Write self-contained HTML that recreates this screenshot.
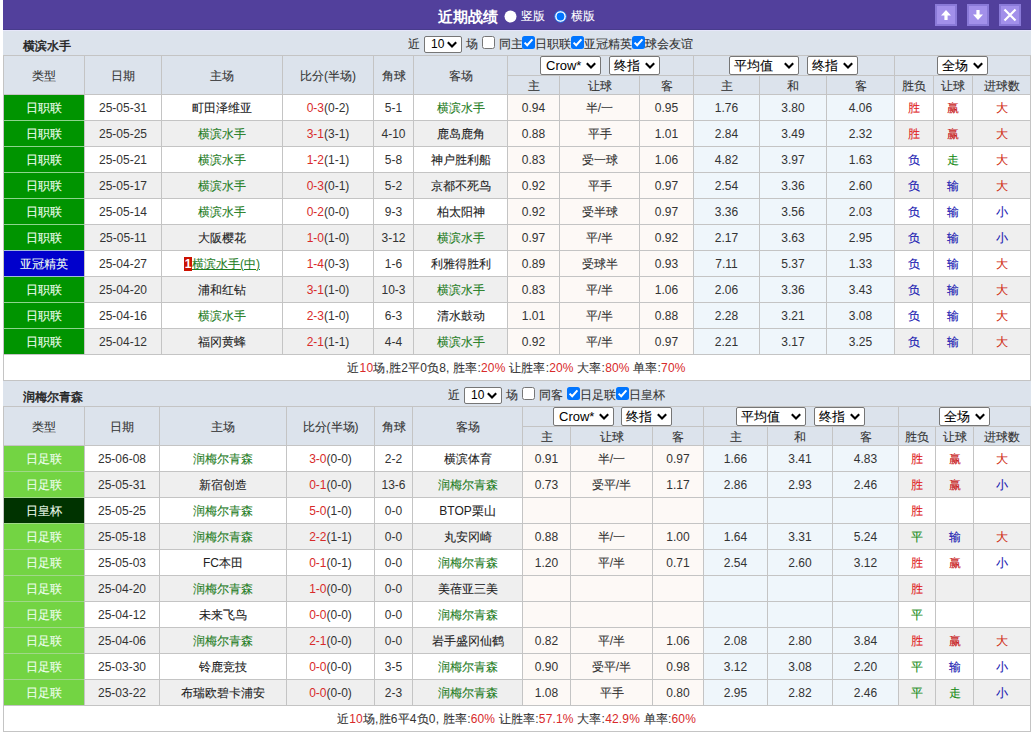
<!DOCTYPE html>
<html><head><meta charset="utf-8">
<style>
html,body{margin:0;padding:0;background:#fff;}
#root{position:relative;width:1033px;height:733px;overflow:hidden;background:#fff;font-family:"Liberation Sans",sans-serif;font-size:12px;}
#root div{position:absolute;box-sizing:border-box;}
#root .t{text-align:center;white-space:nowrap;}
#root .c{-webkit-text-stroke:0.1px currentColor;}
#root .b .c{-webkit-text-stroke:0.45px currentColor;}
#root .nb .c{-webkit-text-stroke:0;}
#root .sel{background:#fff;border:1px solid #767676;border-radius:2px;box-sizing:content-box;color:#000;}
</style></head><body><div id="root">
<div style="left:3px;top:0px;width:1028px;height:30px;background:#52409c"></div>
<div style="left:3px;top:30px;width:1028px;height:1px;background:#e6e6fa"></div>
<div style="left:3px;top:29px;width:1028px;height:1px;background:#483c8c"></div>
<div class="t" style="left:438px;top:7px;width:64px;height:20px;line-height:20px;font-size:15px;font-weight:bold;color:#fff;text-align:left"><span class="nb"><span class="c">近期战绩</span></span></div>
<svg style="position:absolute;left:504px;top:10px" width="13" height="13" viewBox="0 0 13 13"><circle cx="6.5" cy="6.5" r="6" fill="#fff"/></svg>
<div class="t" style="left:521px;top:6px;width:30px;height:20px;line-height:20px;color:#fff;text-align:left"><span class="c">竖版</span></div>
<svg style="position:absolute;left:554px;top:10px" width="13" height="13" viewBox="0 0 13 13"><circle cx="6.5" cy="6.5" r="5.8" fill="#fff" stroke="#1a6fe8" stroke-width="1"/><circle cx="6.5" cy="6.5" r="3.9" fill="#0075ff"/></svg>
<div class="t" style="left:571px;top:6px;width:30px;height:20px;line-height:20px;color:#fff;text-align:left"><span class="c">横版</span></div>
<div style="left:935px;top:4px;width:22px;height:22px;background:#8a7ad8"></div>
<div style="left:937px;top:6px;width:18px;height:18px;background:#a290ea"></div>
<svg style="position:absolute;left:935px;top:4px" width="22" height="22" viewBox="0 0 22 22"><path d="M11 6 L16 11.5 L12.6 11.5 L12.6 16 L9.4 16 L9.4 11.5 L6 11.5 Z" fill="#fff"/></svg>
<div style="left:967px;top:4px;width:22px;height:22px;background:#8a7ad8"></div>
<div style="left:969px;top:6px;width:18px;height:18px;background:#a290ea"></div>
<svg style="position:absolute;left:967px;top:4px" width="22" height="22" viewBox="0 0 22 22"><path d="M11 16 L16 10.5 L12.6 10.5 L12.6 6 L9.4 6 L9.4 10.5 L6 10.5 Z" fill="#fff"/></svg>
<div style="left:999px;top:4px;width:22px;height:22px;background:#8a7ad8"></div>
<div style="left:1001px;top:6px;width:18px;height:18px;background:#a290ea"></div>
<svg style="position:absolute;left:999px;top:4px" width="22" height="22" viewBox="0 0 22 22"><path d="M5.5 5.5 L16.5 16.5 M16.5 5.5 L5.5 16.5" stroke="#fff" stroke-width="2.2"/></svg>
<div style="left:3px;top:31px;width:1028px;height:24px;background:#dce3ec"></div>
<div class="t" style="left:23px;top:38px;width:80px;height:16px;line-height:16px;color:#222222;text-align:left"><span class="b"><span class="c">横滨水手</span></span></div>
<div class="t" style="left:408px;top:35px;width:14px;height:18px;line-height:18px;color:#333333;text-align:left"><span class="c">近</span></div>
<div class="sel" style="left:424px;top:36px;width:36px;height:15px;"><span style="position:absolute;left:6px;top:0;line-height:15px;font-size:12px;font-family:"Liberation Mono",monospace;letter-spacing:-1px;top:1px">10</span><svg style="position:absolute;left:22px;top:4px" width="10" height="7" viewBox="0 0 10 7"><path d="M0.8 1.2 L5 5.4 L9.2 1.2" fill="none" stroke="#000" stroke-width="2.1"/></svg></div>
<div class="t" style="left:466px;top:35px;width:14px;height:18px;line-height:18px;color:#333333;text-align:left"><span class="c">场</span></div>
<svg style="position:absolute;left:482px;top:36px" width="13" height="13" viewBox="0 0 13 13"><rect x="0.5" y="0.5" width="12" height="12" rx="2" fill="#fff" stroke="#767676" stroke-width="1"/></svg>
<div class="t" style="left:499px;top:35px;width:24px;height:18px;line-height:18px;color:#333333;text-align:left"><span class="c">同主</span></div>
<svg style="position:absolute;left:522px;top:36px" width="13" height="13" viewBox="0 0 13 13"><rect x="0" y="0" width="13" height="13" rx="2.5" fill="#0075ff"/><path d="M2.6 6.6 L5.2 9.2 L10.4 3.4" fill="none" stroke="#fff" stroke-width="2"/></svg>
<div class="t" style="left:535px;top:35px;width:36px;height:18px;line-height:18px;color:#333333;text-align:left"><span class="c">日职联</span></div>
<svg style="position:absolute;left:571px;top:36px" width="13" height="13" viewBox="0 0 13 13"><rect x="0" y="0" width="13" height="13" rx="2.5" fill="#0075ff"/><path d="M2.6 6.6 L5.2 9.2 L10.4 3.4" fill="none" stroke="#fff" stroke-width="2"/></svg>
<div class="t" style="left:584px;top:35px;width:48px;height:18px;line-height:18px;color:#333333;text-align:left"><span class="c">亚冠精英</span></div>
<svg style="position:absolute;left:632px;top:36px" width="13" height="13" viewBox="0 0 13 13"><rect x="0" y="0" width="13" height="13" rx="2.5" fill="#0075ff"/><path d="M2.6 6.6 L5.2 9.2 L10.4 3.4" fill="none" stroke="#fff" stroke-width="2"/></svg>
<div class="t" style="left:645px;top:35px;width:48px;height:18px;line-height:18px;color:#333333;text-align:left"><span class="c">球会友谊</span></div>
<div style="left:3px;top:55px;width:1028px;height:39px;background:#dce3ec"></div>
<div style="left:3px;top:94px;width:1027px;height:26px;background:#ffffff"></div>
<div style="left:4px;top:95px;width:80px;height:25px;background:#009400"></div>
<div style="left:508px;top:94px;width:185px;height:26px;background:#fdf9f6"></div>
<div style="left:694px;top:94px;width:200px;height:26px;background:#eff6fb"></div>
<div style="left:3px;top:120px;width:1027px;height:26px;background:#efefef"></div>
<div style="left:4px;top:121px;width:80px;height:25px;background:#009400"></div>
<div style="left:508px;top:120px;width:185px;height:26px;background:#fdf9f6"></div>
<div style="left:694px;top:120px;width:200px;height:26px;background:#eff6fb"></div>
<div style="left:3px;top:146px;width:1027px;height:26px;background:#ffffff"></div>
<div style="left:4px;top:147px;width:80px;height:25px;background:#009400"></div>
<div style="left:508px;top:146px;width:185px;height:26px;background:#fdf9f6"></div>
<div style="left:694px;top:146px;width:200px;height:26px;background:#eff6fb"></div>
<div style="left:3px;top:172px;width:1027px;height:26px;background:#efefef"></div>
<div style="left:4px;top:173px;width:80px;height:25px;background:#009400"></div>
<div style="left:508px;top:172px;width:185px;height:26px;background:#fdf9f6"></div>
<div style="left:694px;top:172px;width:200px;height:26px;background:#eff6fb"></div>
<div style="left:3px;top:198px;width:1027px;height:26px;background:#ffffff"></div>
<div style="left:4px;top:199px;width:80px;height:25px;background:#009400"></div>
<div style="left:508px;top:198px;width:185px;height:26px;background:#fdf9f6"></div>
<div style="left:694px;top:198px;width:200px;height:26px;background:#eff6fb"></div>
<div style="left:3px;top:224px;width:1027px;height:26px;background:#efefef"></div>
<div style="left:4px;top:225px;width:80px;height:25px;background:#009400"></div>
<div style="left:508px;top:224px;width:185px;height:26px;background:#fdf9f6"></div>
<div style="left:694px;top:224px;width:200px;height:26px;background:#eff6fb"></div>
<div style="left:3px;top:250px;width:1027px;height:26px;background:#ffffff"></div>
<div style="left:4px;top:251px;width:80px;height:25px;background:#0000cc"></div>
<div style="left:508px;top:250px;width:185px;height:26px;background:#fdf9f6"></div>
<div style="left:694px;top:250px;width:200px;height:26px;background:#eff6fb"></div>
<div style="left:3px;top:276px;width:1027px;height:26px;background:#efefef"></div>
<div style="left:4px;top:277px;width:80px;height:25px;background:#009400"></div>
<div style="left:508px;top:276px;width:185px;height:26px;background:#fdf9f6"></div>
<div style="left:694px;top:276px;width:200px;height:26px;background:#eff6fb"></div>
<div style="left:3px;top:302px;width:1027px;height:26px;background:#ffffff"></div>
<div style="left:4px;top:303px;width:80px;height:25px;background:#009400"></div>
<div style="left:508px;top:302px;width:185px;height:26px;background:#fdf9f6"></div>
<div style="left:694px;top:302px;width:200px;height:26px;background:#eff6fb"></div>
<div style="left:3px;top:328px;width:1027px;height:26px;background:#efefef"></div>
<div style="left:4px;top:329px;width:80px;height:25px;background:#009400"></div>
<div style="left:508px;top:328px;width:185px;height:26px;background:#fdf9f6"></div>
<div style="left:694px;top:328px;width:200px;height:26px;background:#eff6fb"></div>
<div style="left:3px;top:354px;width:1027px;height:26px;background:#fff"></div>
<div style="left:3px;top:55px;width:1028px;height:1px;background:#c4c4c4"></div>
<div style="left:507px;top:75px;width:524px;height:1px;background:#c4c4c4"></div>
<div style="left:3px;top:94px;width:1028px;height:1px;background:#c4c4c4"></div>
<div style="left:3px;top:120px;width:1028px;height:1px;background:#c4c4c4"></div>
<div style="left:3px;top:146px;width:1028px;height:1px;background:#c4c4c4"></div>
<div style="left:3px;top:172px;width:1028px;height:1px;background:#c4c4c4"></div>
<div style="left:3px;top:198px;width:1028px;height:1px;background:#c4c4c4"></div>
<div style="left:3px;top:224px;width:1028px;height:1px;background:#c4c4c4"></div>
<div style="left:3px;top:250px;width:1028px;height:1px;background:#c4c4c4"></div>
<div style="left:3px;top:276px;width:1028px;height:1px;background:#c4c4c4"></div>
<div style="left:3px;top:302px;width:1028px;height:1px;background:#c4c4c4"></div>
<div style="left:3px;top:328px;width:1028px;height:1px;background:#c4c4c4"></div>
<div style="left:3px;top:354px;width:1028px;height:1px;background:#c4c4c4"></div>
<div style="left:3px;top:380px;width:1028px;height:1px;background:#c4c4c4"></div>
<div style="left:3px;top:55px;width:1px;height:326px;background:#c4c4c4"></div>
<div style="left:84px;top:55px;width:1px;height:300px;background:#c4c4c4"></div>
<div style="left:161px;top:55px;width:1px;height:300px;background:#c4c4c4"></div>
<div style="left:282px;top:55px;width:1px;height:300px;background:#c4c4c4"></div>
<div style="left:373px;top:55px;width:1px;height:300px;background:#c4c4c4"></div>
<div style="left:413px;top:55px;width:1px;height:300px;background:#c4c4c4"></div>
<div style="left:507px;top:55px;width:1px;height:300px;background:#c4c4c4"></div>
<div style="left:559px;top:75px;width:1px;height:280px;background:#c4c4c4"></div>
<div style="left:639px;top:75px;width:1px;height:280px;background:#c4c4c4"></div>
<div style="left:693px;top:55px;width:1px;height:300px;background:#c4c4c4"></div>
<div style="left:759px;top:75px;width:1px;height:280px;background:#c4c4c4"></div>
<div style="left:826px;top:75px;width:1px;height:280px;background:#c4c4c4"></div>
<div style="left:894px;top:55px;width:1px;height:300px;background:#c4c4c4"></div>
<div style="left:933px;top:75px;width:1px;height:280px;background:#c4c4c4"></div>
<div style="left:972px;top:75px;width:1px;height:280px;background:#c4c4c4"></div>
<div style="left:1030px;top:55px;width:1px;height:326px;background:#c4c4c4"></div>
<div style="left:4px;top:120px;width:80px;height:1px;background:#8ed48e"></div>
<div style="left:4px;top:146px;width:80px;height:1px;background:#8ed48e"></div>
<div style="left:4px;top:172px;width:80px;height:1px;background:#8ed48e"></div>
<div style="left:4px;top:198px;width:80px;height:1px;background:#8ed48e"></div>
<div style="left:4px;top:224px;width:80px;height:1px;background:#8ed48e"></div>
<div style="left:4px;top:250px;width:80px;height:1px;background:#a0b8d8"></div>
<div style="left:4px;top:276px;width:80px;height:1px;background:#a0b8d8"></div>
<div style="left:4px;top:302px;width:80px;height:1px;background:#8ed48e"></div>
<div style="left:4px;top:328px;width:80px;height:1px;background:#8ed48e"></div>
<div class="t" style="left:4px;top:57px;width:80px;height:38px;line-height:38px;color:#333333"><span class="c">类型</span></div>
<div class="t" style="left:85px;top:57px;width:76px;height:38px;line-height:38px;color:#333333"><span class="c">日期</span></div>
<div class="t" style="left:162px;top:57px;width:120px;height:38px;line-height:38px;color:#333333"><span class="c">主场</span></div>
<div class="t" style="left:283px;top:57px;width:90px;height:38px;line-height:38px;color:#333333"><span class="c">比分</span>(<span class="c">半场</span>)</div>
<div class="t" style="left:374px;top:57px;width:39px;height:38px;line-height:38px;color:#333333"><span class="c">角球</span></div>
<div class="t" style="left:414px;top:57px;width:93px;height:38px;line-height:38px;color:#333333"><span class="c">客场</span></div>
<div class="t" style="left:508px;top:77px;width:51px;height:18px;line-height:18px;color:#333333"><span class="c">主</span></div>
<div class="t" style="left:560px;top:77px;width:79px;height:18px;line-height:18px;color:#333333"><span class="c">让球</span></div>
<div class="t" style="left:640px;top:77px;width:53px;height:18px;line-height:18px;color:#333333"><span class="c">客</span></div>
<div class="t" style="left:694px;top:77px;width:65px;height:18px;line-height:18px;color:#333333"><span class="c">主</span></div>
<div class="t" style="left:760px;top:77px;width:66px;height:18px;line-height:18px;color:#333333"><span class="c">和</span></div>
<div class="t" style="left:827px;top:77px;width:67px;height:18px;line-height:18px;color:#333333"><span class="c">客</span></div>
<div class="t" style="left:895px;top:77px;width:38px;height:18px;line-height:18px;color:#333333"><span class="c">胜负</span></div>
<div class="t" style="left:934px;top:77px;width:38px;height:18px;line-height:18px;color:#333333"><span class="c">让球</span></div>
<div class="t" style="left:973px;top:77px;width:57px;height:18px;line-height:18px;color:#333333"><span class="c">进球数</span></div>
<div class="t" style="left:4px;top:96px;width:80px;height:25px;line-height:25px;color:#f0fff0"><span class="c">日职联</span></div>
<div class="t" style="left:85px;top:96px;width:76px;height:25px;line-height:25px;color:#333333">25-05-31</div>
<div class="t" style="left:162px;top:96px;width:120px;height:25px;line-height:25px;color:#222222"><span class="c">町田泽维亚</span></div>
<div class="t" style="left:283px;top:96px;width:90px;height:25px;line-height:25px;color:#333333"><span style="color:#d82a2a">0-3</span>(0-2)</div>
<div class="t" style="left:374px;top:96px;width:39px;height:25px;line-height:25px;color:#333333">5-1</div>
<div class="t" style="left:414px;top:96px;width:93px;height:25px;line-height:25px;color:#1f7d1f"><span class="c">横滨水手</span></div>
<div class="t" style="left:508px;top:96px;width:51px;height:25px;line-height:25px;color:#333333">0.94</div>
<div class="t" style="left:560px;top:96px;width:79px;height:25px;line-height:25px;color:#333333"><span class="c">半</span>/<span class="c">一</span></div>
<div class="t" style="left:640px;top:96px;width:53px;height:25px;line-height:25px;color:#333333">0.95</div>
<div class="t" style="left:694px;top:96px;width:65px;height:25px;line-height:25px;color:#333333">1.76</div>
<div class="t" style="left:760px;top:96px;width:66px;height:25px;line-height:25px;color:#333333">3.80</div>
<div class="t" style="left:827px;top:96px;width:67px;height:25px;line-height:25px;color:#333333">4.06</div>
<div class="t" style="left:895px;top:96px;width:38px;height:25px;line-height:25px;color:#e02424"><span class="c">胜</span></div>
<div class="t" style="left:934px;top:96px;width:38px;height:25px;line-height:25px;color:#c81818"><span class="c">赢</span></div>
<div class="t" style="left:973px;top:96px;width:57px;height:25px;line-height:25px;color:#d02a10"><span class="c">大</span></div>
<div class="t" style="left:4px;top:122px;width:80px;height:25px;line-height:25px;color:#f0fff0"><span class="c">日职联</span></div>
<div class="t" style="left:85px;top:122px;width:76px;height:25px;line-height:25px;color:#333333">25-05-25</div>
<div class="t" style="left:162px;top:122px;width:120px;height:25px;line-height:25px;color:#1f7d1f"><span class="c">横滨水手</span></div>
<div class="t" style="left:283px;top:122px;width:90px;height:25px;line-height:25px;color:#333333"><span style="color:#d82a2a">3-1</span>(3-1)</div>
<div class="t" style="left:374px;top:122px;width:39px;height:25px;line-height:25px;color:#333333">4-10</div>
<div class="t" style="left:414px;top:122px;width:93px;height:25px;line-height:25px;color:#222222"><span class="c">鹿岛鹿角</span></div>
<div class="t" style="left:508px;top:122px;width:51px;height:25px;line-height:25px;color:#333333">0.88</div>
<div class="t" style="left:560px;top:122px;width:79px;height:25px;line-height:25px;color:#333333"><span class="c">平手</span></div>
<div class="t" style="left:640px;top:122px;width:53px;height:25px;line-height:25px;color:#333333">1.01</div>
<div class="t" style="left:694px;top:122px;width:65px;height:25px;line-height:25px;color:#333333">2.84</div>
<div class="t" style="left:760px;top:122px;width:66px;height:25px;line-height:25px;color:#333333">3.49</div>
<div class="t" style="left:827px;top:122px;width:67px;height:25px;line-height:25px;color:#333333">2.32</div>
<div class="t" style="left:895px;top:122px;width:38px;height:25px;line-height:25px;color:#e02424"><span class="c">胜</span></div>
<div class="t" style="left:934px;top:122px;width:38px;height:25px;line-height:25px;color:#c81818"><span class="c">赢</span></div>
<div class="t" style="left:973px;top:122px;width:57px;height:25px;line-height:25px;color:#d02a10"><span class="c">大</span></div>
<div class="t" style="left:4px;top:148px;width:80px;height:25px;line-height:25px;color:#f0fff0"><span class="c">日职联</span></div>
<div class="t" style="left:85px;top:148px;width:76px;height:25px;line-height:25px;color:#333333">25-05-21</div>
<div class="t" style="left:162px;top:148px;width:120px;height:25px;line-height:25px;color:#1f7d1f"><span class="c">横滨水手</span></div>
<div class="t" style="left:283px;top:148px;width:90px;height:25px;line-height:25px;color:#333333"><span style="color:#d82a2a">1-2</span>(1-1)</div>
<div class="t" style="left:374px;top:148px;width:39px;height:25px;line-height:25px;color:#333333">5-8</div>
<div class="t" style="left:414px;top:148px;width:93px;height:25px;line-height:25px;color:#222222"><span class="c">神户胜利船</span></div>
<div class="t" style="left:508px;top:148px;width:51px;height:25px;line-height:25px;color:#333333">0.83</div>
<div class="t" style="left:560px;top:148px;width:79px;height:25px;line-height:25px;color:#333333"><span class="c">受一球</span></div>
<div class="t" style="left:640px;top:148px;width:53px;height:25px;line-height:25px;color:#333333">1.06</div>
<div class="t" style="left:694px;top:148px;width:65px;height:25px;line-height:25px;color:#333333">4.82</div>
<div class="t" style="left:760px;top:148px;width:66px;height:25px;line-height:25px;color:#333333">3.97</div>
<div class="t" style="left:827px;top:148px;width:67px;height:25px;line-height:25px;color:#333333">1.63</div>
<div class="t" style="left:895px;top:148px;width:38px;height:25px;line-height:25px;color:#1414b0"><span class="c">负</span></div>
<div class="t" style="left:934px;top:148px;width:38px;height:25px;line-height:25px;color:#138a13"><span class="c">走</span></div>
<div class="t" style="left:973px;top:148px;width:57px;height:25px;line-height:25px;color:#d02a10"><span class="c">大</span></div>
<div class="t" style="left:4px;top:174px;width:80px;height:25px;line-height:25px;color:#f0fff0"><span class="c">日职联</span></div>
<div class="t" style="left:85px;top:174px;width:76px;height:25px;line-height:25px;color:#333333">25-05-17</div>
<div class="t" style="left:162px;top:174px;width:120px;height:25px;line-height:25px;color:#1f7d1f"><span class="c">横滨水手</span></div>
<div class="t" style="left:283px;top:174px;width:90px;height:25px;line-height:25px;color:#333333"><span style="color:#d82a2a">0-3</span>(0-1)</div>
<div class="t" style="left:374px;top:174px;width:39px;height:25px;line-height:25px;color:#333333">5-2</div>
<div class="t" style="left:414px;top:174px;width:93px;height:25px;line-height:25px;color:#222222"><span class="c">京都不死鸟</span></div>
<div class="t" style="left:508px;top:174px;width:51px;height:25px;line-height:25px;color:#333333">0.92</div>
<div class="t" style="left:560px;top:174px;width:79px;height:25px;line-height:25px;color:#333333"><span class="c">平手</span></div>
<div class="t" style="left:640px;top:174px;width:53px;height:25px;line-height:25px;color:#333333">0.97</div>
<div class="t" style="left:694px;top:174px;width:65px;height:25px;line-height:25px;color:#333333">2.54</div>
<div class="t" style="left:760px;top:174px;width:66px;height:25px;line-height:25px;color:#333333">3.36</div>
<div class="t" style="left:827px;top:174px;width:67px;height:25px;line-height:25px;color:#333333">2.60</div>
<div class="t" style="left:895px;top:174px;width:38px;height:25px;line-height:25px;color:#1414b0"><span class="c">负</span></div>
<div class="t" style="left:934px;top:174px;width:38px;height:25px;line-height:25px;color:#1414b0"><span class="c">输</span></div>
<div class="t" style="left:973px;top:174px;width:57px;height:25px;line-height:25px;color:#d02a10"><span class="c">大</span></div>
<div class="t" style="left:4px;top:200px;width:80px;height:25px;line-height:25px;color:#f0fff0"><span class="c">日职联</span></div>
<div class="t" style="left:85px;top:200px;width:76px;height:25px;line-height:25px;color:#333333">25-05-14</div>
<div class="t" style="left:162px;top:200px;width:120px;height:25px;line-height:25px;color:#1f7d1f"><span class="c">横滨水手</span></div>
<div class="t" style="left:283px;top:200px;width:90px;height:25px;line-height:25px;color:#333333"><span style="color:#d82a2a">0-2</span>(0-0)</div>
<div class="t" style="left:374px;top:200px;width:39px;height:25px;line-height:25px;color:#333333">9-3</div>
<div class="t" style="left:414px;top:200px;width:93px;height:25px;line-height:25px;color:#222222"><span class="c">柏太阳神</span></div>
<div class="t" style="left:508px;top:200px;width:51px;height:25px;line-height:25px;color:#333333">0.92</div>
<div class="t" style="left:560px;top:200px;width:79px;height:25px;line-height:25px;color:#333333"><span class="c">受半球</span></div>
<div class="t" style="left:640px;top:200px;width:53px;height:25px;line-height:25px;color:#333333">0.97</div>
<div class="t" style="left:694px;top:200px;width:65px;height:25px;line-height:25px;color:#333333">3.36</div>
<div class="t" style="left:760px;top:200px;width:66px;height:25px;line-height:25px;color:#333333">3.56</div>
<div class="t" style="left:827px;top:200px;width:67px;height:25px;line-height:25px;color:#333333">2.03</div>
<div class="t" style="left:895px;top:200px;width:38px;height:25px;line-height:25px;color:#1414b0"><span class="c">负</span></div>
<div class="t" style="left:934px;top:200px;width:38px;height:25px;line-height:25px;color:#1414b0"><span class="c">输</span></div>
<div class="t" style="left:973px;top:200px;width:57px;height:25px;line-height:25px;color:#1414b0"><span class="c">小</span></div>
<div class="t" style="left:4px;top:226px;width:80px;height:25px;line-height:25px;color:#f0fff0"><span class="c">日职联</span></div>
<div class="t" style="left:85px;top:226px;width:76px;height:25px;line-height:25px;color:#333333">25-05-11</div>
<div class="t" style="left:162px;top:226px;width:120px;height:25px;line-height:25px;color:#222222"><span class="c">大阪樱花</span></div>
<div class="t" style="left:283px;top:226px;width:90px;height:25px;line-height:25px;color:#333333"><span style="color:#d82a2a">1-0</span>(1-0)</div>
<div class="t" style="left:374px;top:226px;width:39px;height:25px;line-height:25px;color:#333333">3-12</div>
<div class="t" style="left:414px;top:226px;width:93px;height:25px;line-height:25px;color:#1f7d1f"><span class="c">横滨水手</span></div>
<div class="t" style="left:508px;top:226px;width:51px;height:25px;line-height:25px;color:#333333">0.97</div>
<div class="t" style="left:560px;top:226px;width:79px;height:25px;line-height:25px;color:#333333"><span class="c">平</span>/<span class="c">半</span></div>
<div class="t" style="left:640px;top:226px;width:53px;height:25px;line-height:25px;color:#333333">0.92</div>
<div class="t" style="left:694px;top:226px;width:65px;height:25px;line-height:25px;color:#333333">2.17</div>
<div class="t" style="left:760px;top:226px;width:66px;height:25px;line-height:25px;color:#333333">3.63</div>
<div class="t" style="left:827px;top:226px;width:67px;height:25px;line-height:25px;color:#333333">2.95</div>
<div class="t" style="left:895px;top:226px;width:38px;height:25px;line-height:25px;color:#1414b0"><span class="c">负</span></div>
<div class="t" style="left:934px;top:226px;width:38px;height:25px;line-height:25px;color:#1414b0"><span class="c">输</span></div>
<div class="t" style="left:973px;top:226px;width:57px;height:25px;line-height:25px;color:#1414b0"><span class="c">小</span></div>
<div class="t" style="left:4px;top:252px;width:80px;height:25px;line-height:25px;color:#f0fff0"><span class="c">亚冠精英</span></div>
<div class="t" style="left:85px;top:252px;width:76px;height:25px;line-height:25px;color:#333333">25-04-27</div>
<div class="t" style="left:162px;top:252px;width:120px;height:25px;line-height:25px;"><span style="display:inline-block;background:#cc1100;color:#fff;font-weight:bold;width:8px;height:14px;line-height:14px;font-size:12px;vertical-align:0px;text-align:center">1</span><span style="color:#1f7d1f;text-decoration:underline"><span class="c">横滨水手</span>(<span class="c">中</span>)</span></div>
<div class="t" style="left:283px;top:252px;width:90px;height:25px;line-height:25px;color:#333333"><span style="color:#d82a2a">1-4</span>(0-3)</div>
<div class="t" style="left:374px;top:252px;width:39px;height:25px;line-height:25px;color:#333333">1-6</div>
<div class="t" style="left:414px;top:252px;width:93px;height:25px;line-height:25px;color:#222222"><span class="c">利雅得胜利</span></div>
<div class="t" style="left:508px;top:252px;width:51px;height:25px;line-height:25px;color:#333333">0.89</div>
<div class="t" style="left:560px;top:252px;width:79px;height:25px;line-height:25px;color:#333333"><span class="c">受球半</span></div>
<div class="t" style="left:640px;top:252px;width:53px;height:25px;line-height:25px;color:#333333">0.93</div>
<div class="t" style="left:694px;top:252px;width:65px;height:25px;line-height:25px;color:#333333">7.11</div>
<div class="t" style="left:760px;top:252px;width:66px;height:25px;line-height:25px;color:#333333">5.37</div>
<div class="t" style="left:827px;top:252px;width:67px;height:25px;line-height:25px;color:#333333">1.33</div>
<div class="t" style="left:895px;top:252px;width:38px;height:25px;line-height:25px;color:#1414b0"><span class="c">负</span></div>
<div class="t" style="left:934px;top:252px;width:38px;height:25px;line-height:25px;color:#1414b0"><span class="c">输</span></div>
<div class="t" style="left:973px;top:252px;width:57px;height:25px;line-height:25px;color:#d02a10"><span class="c">大</span></div>
<div class="t" style="left:4px;top:278px;width:80px;height:25px;line-height:25px;color:#f0fff0"><span class="c">日职联</span></div>
<div class="t" style="left:85px;top:278px;width:76px;height:25px;line-height:25px;color:#333333">25-04-20</div>
<div class="t" style="left:162px;top:278px;width:120px;height:25px;line-height:25px;color:#222222"><span class="c">浦和红钻</span></div>
<div class="t" style="left:283px;top:278px;width:90px;height:25px;line-height:25px;color:#333333"><span style="color:#d82a2a">3-1</span>(1-0)</div>
<div class="t" style="left:374px;top:278px;width:39px;height:25px;line-height:25px;color:#333333">10-3</div>
<div class="t" style="left:414px;top:278px;width:93px;height:25px;line-height:25px;color:#1f7d1f"><span class="c">横滨水手</span></div>
<div class="t" style="left:508px;top:278px;width:51px;height:25px;line-height:25px;color:#333333">0.83</div>
<div class="t" style="left:560px;top:278px;width:79px;height:25px;line-height:25px;color:#333333"><span class="c">平</span>/<span class="c">半</span></div>
<div class="t" style="left:640px;top:278px;width:53px;height:25px;line-height:25px;color:#333333">1.06</div>
<div class="t" style="left:694px;top:278px;width:65px;height:25px;line-height:25px;color:#333333">2.06</div>
<div class="t" style="left:760px;top:278px;width:66px;height:25px;line-height:25px;color:#333333">3.36</div>
<div class="t" style="left:827px;top:278px;width:67px;height:25px;line-height:25px;color:#333333">3.43</div>
<div class="t" style="left:895px;top:278px;width:38px;height:25px;line-height:25px;color:#1414b0"><span class="c">负</span></div>
<div class="t" style="left:934px;top:278px;width:38px;height:25px;line-height:25px;color:#1414b0"><span class="c">输</span></div>
<div class="t" style="left:973px;top:278px;width:57px;height:25px;line-height:25px;color:#d02a10"><span class="c">大</span></div>
<div class="t" style="left:4px;top:304px;width:80px;height:25px;line-height:25px;color:#f0fff0"><span class="c">日职联</span></div>
<div class="t" style="left:85px;top:304px;width:76px;height:25px;line-height:25px;color:#333333">25-04-16</div>
<div class="t" style="left:162px;top:304px;width:120px;height:25px;line-height:25px;color:#1f7d1f"><span class="c">横滨水手</span></div>
<div class="t" style="left:283px;top:304px;width:90px;height:25px;line-height:25px;color:#333333"><span style="color:#d82a2a">2-3</span>(1-0)</div>
<div class="t" style="left:374px;top:304px;width:39px;height:25px;line-height:25px;color:#333333">6-3</div>
<div class="t" style="left:414px;top:304px;width:93px;height:25px;line-height:25px;color:#222222"><span class="c">清水鼓动</span></div>
<div class="t" style="left:508px;top:304px;width:51px;height:25px;line-height:25px;color:#333333">1.01</div>
<div class="t" style="left:560px;top:304px;width:79px;height:25px;line-height:25px;color:#333333"><span class="c">平</span>/<span class="c">半</span></div>
<div class="t" style="left:640px;top:304px;width:53px;height:25px;line-height:25px;color:#333333">0.88</div>
<div class="t" style="left:694px;top:304px;width:65px;height:25px;line-height:25px;color:#333333">2.28</div>
<div class="t" style="left:760px;top:304px;width:66px;height:25px;line-height:25px;color:#333333">3.21</div>
<div class="t" style="left:827px;top:304px;width:67px;height:25px;line-height:25px;color:#333333">3.08</div>
<div class="t" style="left:895px;top:304px;width:38px;height:25px;line-height:25px;color:#1414b0"><span class="c">负</span></div>
<div class="t" style="left:934px;top:304px;width:38px;height:25px;line-height:25px;color:#1414b0"><span class="c">输</span></div>
<div class="t" style="left:973px;top:304px;width:57px;height:25px;line-height:25px;color:#d02a10"><span class="c">大</span></div>
<div class="t" style="left:4px;top:330px;width:80px;height:25px;line-height:25px;color:#f0fff0"><span class="c">日职联</span></div>
<div class="t" style="left:85px;top:330px;width:76px;height:25px;line-height:25px;color:#333333">25-04-12</div>
<div class="t" style="left:162px;top:330px;width:120px;height:25px;line-height:25px;color:#222222"><span class="c">福冈黄蜂</span></div>
<div class="t" style="left:283px;top:330px;width:90px;height:25px;line-height:25px;color:#333333"><span style="color:#d82a2a">2-1</span>(1-1)</div>
<div class="t" style="left:374px;top:330px;width:39px;height:25px;line-height:25px;color:#333333">4-4</div>
<div class="t" style="left:414px;top:330px;width:93px;height:25px;line-height:25px;color:#1f7d1f"><span class="c">横滨水手</span></div>
<div class="t" style="left:508px;top:330px;width:51px;height:25px;line-height:25px;color:#333333">0.92</div>
<div class="t" style="left:560px;top:330px;width:79px;height:25px;line-height:25px;color:#333333"><span class="c">平</span>/<span class="c">半</span></div>
<div class="t" style="left:640px;top:330px;width:53px;height:25px;line-height:25px;color:#333333">0.97</div>
<div class="t" style="left:694px;top:330px;width:65px;height:25px;line-height:25px;color:#333333">2.21</div>
<div class="t" style="left:760px;top:330px;width:66px;height:25px;line-height:25px;color:#333333">3.17</div>
<div class="t" style="left:827px;top:330px;width:67px;height:25px;line-height:25px;color:#333333">3.25</div>
<div class="t" style="left:895px;top:330px;width:38px;height:25px;line-height:25px;color:#1414b0"><span class="c">负</span></div>
<div class="t" style="left:934px;top:330px;width:38px;height:25px;line-height:25px;color:#1414b0"><span class="c">输</span></div>
<div class="t" style="left:973px;top:330px;width:57px;height:25px;line-height:25px;color:#d02a10"><span class="c">大</span></div>
<div class="t" style="left:3px;top:356px;width:1027px;height:25px;line-height:25px;color:#333333;letter-spacing:0.18px"><span class="c">近</span><span style="color:#d82a2a">10</span><span class="c">场</span>,<span class="c">胜</span>2<span class="c">平</span>0<span class="c">负</span>8, <span class="c">胜率</span>:<span style="color:#d82a2a">20%</span> <span class="c">让胜率</span>:<span style="color:#d82a2a">20%</span> <span class="c">大率</span>:<span style="color:#d82a2a">80%</span> <span class="c">单率</span>:<span style="color:#d82a2a">70%</span></div>
<div class="sel" style="left:540px;top:56px;width:59px;height:17px;"><span style="position:absolute;left:5px;top:0;line-height:17px;font-size:13px;">Crow*</span><svg style="position:absolute;left:45px;top:5px" width="10" height="7" viewBox="0 0 10 7"><path d="M0.8 1.2 L5 5.4 L9.2 1.2" fill="none" stroke="#000" stroke-width="2.1"/></svg></div>
<div class="sel" style="left:609px;top:56px;width:49px;height:17px;"><span style="position:absolute;left:4px;top:0;line-height:17px;font-size:13px;"><span class="c">终指</span></span><svg style="position:absolute;left:35px;top:5px" width="10" height="7" viewBox="0 0 10 7"><path d="M0.8 1.2 L5 5.4 L9.2 1.2" fill="none" stroke="#000" stroke-width="2.1"/></svg></div>
<div class="sel" style="left:729px;top:56px;width:68px;height:17px;"><span style="position:absolute;left:4px;top:0;line-height:17px;font-size:13px;"><span class="c">平均值</span></span><svg style="position:absolute;left:54px;top:5px" width="10" height="7" viewBox="0 0 10 7"><path d="M0.8 1.2 L5 5.4 L9.2 1.2" fill="none" stroke="#000" stroke-width="2.1"/></svg></div>
<div class="sel" style="left:807px;top:56px;width:49px;height:17px;"><span style="position:absolute;left:4px;top:0;line-height:17px;font-size:13px;"><span class="c">终指</span></span><svg style="position:absolute;left:35px;top:5px" width="10" height="7" viewBox="0 0 10 7"><path d="M0.8 1.2 L5 5.4 L9.2 1.2" fill="none" stroke="#000" stroke-width="2.1"/></svg></div>
<div class="sel" style="left:937px;top:56px;width:49px;height:17px;"><span style="position:absolute;left:4px;top:0;line-height:17px;font-size:13px;"><span class="c">全场</span></span><svg style="position:absolute;left:35px;top:5px" width="10" height="7" viewBox="0 0 10 7"><path d="M0.8 1.2 L5 5.4 L9.2 1.2" fill="none" stroke="#000" stroke-width="2.1"/></svg></div>
<div style="left:3px;top:381px;width:1028px;height:25px;background:#dce3ec"></div>
<div class="t" style="left:23px;top:389px;width:80px;height:16px;line-height:16px;color:#222222;text-align:left"><span class="b"><span class="c">润梅尔青森</span></span></div>
<div class="t" style="left:448px;top:386px;width:14px;height:18px;line-height:18px;color:#333333;text-align:left"><span class="c">近</span></div>
<div class="sel" style="left:464px;top:387px;width:36px;height:15px;"><span style="position:absolute;left:6px;top:0;line-height:15px;font-size:12px;font-family:"Liberation Mono",monospace;letter-spacing:-1px;top:1px">10</span><svg style="position:absolute;left:22px;top:4px" width="10" height="7" viewBox="0 0 10 7"><path d="M0.8 1.2 L5 5.4 L9.2 1.2" fill="none" stroke="#000" stroke-width="2.1"/></svg></div>
<div class="t" style="left:506px;top:386px;width:14px;height:18px;line-height:18px;color:#333333;text-align:left"><span class="c">场</span></div>
<svg style="position:absolute;left:522px;top:387px" width="13" height="13" viewBox="0 0 13 13"><rect x="0.5" y="0.5" width="12" height="12" rx="2" fill="#fff" stroke="#767676" stroke-width="1"/></svg>
<div class="t" style="left:539px;top:386px;width:24px;height:18px;line-height:18px;color:#333333;text-align:left"><span class="c">同客</span></div>
<svg style="position:absolute;left:567px;top:387px" width="13" height="13" viewBox="0 0 13 13"><rect x="0" y="0" width="13" height="13" rx="2.5" fill="#0075ff"/><path d="M2.6 6.6 L5.2 9.2 L10.4 3.4" fill="none" stroke="#fff" stroke-width="2"/></svg>
<div class="t" style="left:580px;top:386px;width:36px;height:18px;line-height:18px;color:#333333;text-align:left"><span class="c">日足联</span></div>
<svg style="position:absolute;left:616px;top:387px" width="13" height="13" viewBox="0 0 13 13"><rect x="0" y="0" width="13" height="13" rx="2.5" fill="#0075ff"/><path d="M2.6 6.6 L5.2 9.2 L10.4 3.4" fill="none" stroke="#fff" stroke-width="2"/></svg>
<div class="t" style="left:629px;top:386px;width:36px;height:18px;line-height:18px;color:#333333;text-align:left"><span class="c">日皇杯</span></div>
<div style="left:3px;top:406px;width:1028px;height:39px;background:#dce3ec"></div>
<div style="left:3px;top:445px;width:1027px;height:26px;background:#ffffff"></div>
<div style="left:4px;top:446px;width:80px;height:25px;background:#73d443"></div>
<div style="left:523px;top:445px;width:180px;height:26px;background:#fdf9f6"></div>
<div style="left:704px;top:445px;width:194px;height:26px;background:#eff6fb"></div>
<div style="left:3px;top:471px;width:1027px;height:26px;background:#efefef"></div>
<div style="left:4px;top:472px;width:80px;height:25px;background:#73d443"></div>
<div style="left:523px;top:471px;width:180px;height:26px;background:#fdf9f6"></div>
<div style="left:704px;top:471px;width:194px;height:26px;background:#eff6fb"></div>
<div style="left:3px;top:497px;width:1027px;height:26px;background:#ffffff"></div>
<div style="left:4px;top:498px;width:80px;height:25px;background:#003300"></div>
<div style="left:523px;top:497px;width:180px;height:26px;background:#fdf9f6"></div>
<div style="left:704px;top:497px;width:194px;height:26px;background:#eff6fb"></div>
<div style="left:3px;top:523px;width:1027px;height:26px;background:#efefef"></div>
<div style="left:4px;top:524px;width:80px;height:25px;background:#73d443"></div>
<div style="left:523px;top:523px;width:180px;height:26px;background:#fdf9f6"></div>
<div style="left:704px;top:523px;width:194px;height:26px;background:#eff6fb"></div>
<div style="left:3px;top:549px;width:1027px;height:26px;background:#ffffff"></div>
<div style="left:4px;top:550px;width:80px;height:25px;background:#73d443"></div>
<div style="left:523px;top:549px;width:180px;height:26px;background:#fdf9f6"></div>
<div style="left:704px;top:549px;width:194px;height:26px;background:#eff6fb"></div>
<div style="left:3px;top:575px;width:1027px;height:26px;background:#efefef"></div>
<div style="left:4px;top:576px;width:80px;height:25px;background:#73d443"></div>
<div style="left:523px;top:575px;width:180px;height:26px;background:#fdf9f6"></div>
<div style="left:704px;top:575px;width:194px;height:26px;background:#eff6fb"></div>
<div style="left:3px;top:601px;width:1027px;height:26px;background:#ffffff"></div>
<div style="left:4px;top:602px;width:80px;height:25px;background:#73d443"></div>
<div style="left:523px;top:601px;width:180px;height:26px;background:#fdf9f6"></div>
<div style="left:704px;top:601px;width:194px;height:26px;background:#eff6fb"></div>
<div style="left:3px;top:627px;width:1027px;height:26px;background:#efefef"></div>
<div style="left:4px;top:628px;width:80px;height:25px;background:#73d443"></div>
<div style="left:523px;top:627px;width:180px;height:26px;background:#fdf9f6"></div>
<div style="left:704px;top:627px;width:194px;height:26px;background:#eff6fb"></div>
<div style="left:3px;top:653px;width:1027px;height:26px;background:#ffffff"></div>
<div style="left:4px;top:654px;width:80px;height:25px;background:#73d443"></div>
<div style="left:523px;top:653px;width:180px;height:26px;background:#fdf9f6"></div>
<div style="left:704px;top:653px;width:194px;height:26px;background:#eff6fb"></div>
<div style="left:3px;top:679px;width:1027px;height:26px;background:#efefef"></div>
<div style="left:4px;top:680px;width:80px;height:25px;background:#73d443"></div>
<div style="left:523px;top:679px;width:180px;height:26px;background:#fdf9f6"></div>
<div style="left:704px;top:679px;width:194px;height:26px;background:#eff6fb"></div>
<div style="left:3px;top:705px;width:1027px;height:26px;background:#fff"></div>
<div style="left:3px;top:406px;width:1028px;height:1px;background:#c4c4c4"></div>
<div style="left:522px;top:426px;width:509px;height:1px;background:#c4c4c4"></div>
<div style="left:3px;top:445px;width:1028px;height:1px;background:#c4c4c4"></div>
<div style="left:3px;top:471px;width:1028px;height:1px;background:#c4c4c4"></div>
<div style="left:3px;top:497px;width:1028px;height:1px;background:#c4c4c4"></div>
<div style="left:3px;top:523px;width:1028px;height:1px;background:#c4c4c4"></div>
<div style="left:3px;top:549px;width:1028px;height:1px;background:#c4c4c4"></div>
<div style="left:3px;top:575px;width:1028px;height:1px;background:#c4c4c4"></div>
<div style="left:3px;top:601px;width:1028px;height:1px;background:#c4c4c4"></div>
<div style="left:3px;top:627px;width:1028px;height:1px;background:#c4c4c4"></div>
<div style="left:3px;top:653px;width:1028px;height:1px;background:#c4c4c4"></div>
<div style="left:3px;top:679px;width:1028px;height:1px;background:#c4c4c4"></div>
<div style="left:3px;top:705px;width:1028px;height:1px;background:#c4c4c4"></div>
<div style="left:3px;top:731px;width:1028px;height:1px;background:#c4c4c4"></div>
<div style="left:3px;top:406px;width:1px;height:326px;background:#c4c4c4"></div>
<div style="left:84px;top:406px;width:1px;height:300px;background:#c4c4c4"></div>
<div style="left:159px;top:406px;width:1px;height:300px;background:#c4c4c4"></div>
<div style="left:286px;top:406px;width:1px;height:300px;background:#c4c4c4"></div>
<div style="left:374px;top:406px;width:1px;height:300px;background:#c4c4c4"></div>
<div style="left:412px;top:406px;width:1px;height:300px;background:#c4c4c4"></div>
<div style="left:522px;top:406px;width:1px;height:300px;background:#c4c4c4"></div>
<div style="left:570px;top:426px;width:1px;height:280px;background:#c4c4c4"></div>
<div style="left:652px;top:426px;width:1px;height:280px;background:#c4c4c4"></div>
<div style="left:703px;top:406px;width:1px;height:300px;background:#c4c4c4"></div>
<div style="left:767px;top:426px;width:1px;height:280px;background:#c4c4c4"></div>
<div style="left:832px;top:426px;width:1px;height:280px;background:#c4c4c4"></div>
<div style="left:898px;top:406px;width:1px;height:300px;background:#c4c4c4"></div>
<div style="left:935px;top:426px;width:1px;height:280px;background:#c4c4c4"></div>
<div style="left:973px;top:426px;width:1px;height:280px;background:#c4c4c4"></div>
<div style="left:1030px;top:406px;width:1px;height:326px;background:#c4c4c4"></div>
<div style="left:4px;top:471px;width:80px;height:1px;background:#a0d888"></div>
<div style="left:4px;top:497px;width:80px;height:1px;background:#a0d888"></div>
<div style="left:4px;top:523px;width:80px;height:1px;background:#a0d888"></div>
<div style="left:4px;top:549px;width:80px;height:1px;background:#a0d888"></div>
<div style="left:4px;top:575px;width:80px;height:1px;background:#a0d888"></div>
<div style="left:4px;top:601px;width:80px;height:1px;background:#a0d888"></div>
<div style="left:4px;top:627px;width:80px;height:1px;background:#a0d888"></div>
<div style="left:4px;top:653px;width:80px;height:1px;background:#a0d888"></div>
<div style="left:4px;top:679px;width:80px;height:1px;background:#a0d888"></div>
<div class="t" style="left:4px;top:408px;width:80px;height:38px;line-height:38px;color:#333333"><span class="c">类型</span></div>
<div class="t" style="left:85px;top:408px;width:74px;height:38px;line-height:38px;color:#333333"><span class="c">日期</span></div>
<div class="t" style="left:160px;top:408px;width:126px;height:38px;line-height:38px;color:#333333"><span class="c">主场</span></div>
<div class="t" style="left:287px;top:408px;width:87px;height:38px;line-height:38px;color:#333333"><span class="c">比分</span>(<span class="c">半场</span>)</div>
<div class="t" style="left:375px;top:408px;width:37px;height:38px;line-height:38px;color:#333333"><span class="c">角球</span></div>
<div class="t" style="left:413px;top:408px;width:109px;height:38px;line-height:38px;color:#333333"><span class="c">客场</span></div>
<div class="t" style="left:523px;top:428px;width:47px;height:18px;line-height:18px;color:#333333"><span class="c">主</span></div>
<div class="t" style="left:571px;top:428px;width:81px;height:18px;line-height:18px;color:#333333"><span class="c">让球</span></div>
<div class="t" style="left:653px;top:428px;width:50px;height:18px;line-height:18px;color:#333333"><span class="c">客</span></div>
<div class="t" style="left:704px;top:428px;width:63px;height:18px;line-height:18px;color:#333333"><span class="c">主</span></div>
<div class="t" style="left:768px;top:428px;width:64px;height:18px;line-height:18px;color:#333333"><span class="c">和</span></div>
<div class="t" style="left:833px;top:428px;width:65px;height:18px;line-height:18px;color:#333333"><span class="c">客</span></div>
<div class="t" style="left:899px;top:428px;width:36px;height:18px;line-height:18px;color:#333333"><span class="c">胜负</span></div>
<div class="t" style="left:936px;top:428px;width:37px;height:18px;line-height:18px;color:#333333"><span class="c">让球</span></div>
<div class="t" style="left:974px;top:428px;width:56px;height:18px;line-height:18px;color:#333333"><span class="c">进球数</span></div>
<div class="t" style="left:4px;top:447px;width:80px;height:25px;line-height:25px;color:#f0fff0"><span class="c">日足联</span></div>
<div class="t" style="left:85px;top:447px;width:74px;height:25px;line-height:25px;color:#333333">25-06-08</div>
<div class="t" style="left:160px;top:447px;width:126px;height:25px;line-height:25px;color:#1f7d1f"><span class="c">润梅尔青森</span></div>
<div class="t" style="left:287px;top:447px;width:87px;height:25px;line-height:25px;color:#333333"><span style="color:#d82a2a">3-0</span>(0-0)</div>
<div class="t" style="left:375px;top:447px;width:37px;height:25px;line-height:25px;color:#333333">2-2</div>
<div class="t" style="left:413px;top:447px;width:109px;height:25px;line-height:25px;color:#222222"><span class="c">横滨体育</span></div>
<div class="t" style="left:523px;top:447px;width:47px;height:25px;line-height:25px;color:#333333">0.91</div>
<div class="t" style="left:571px;top:447px;width:81px;height:25px;line-height:25px;color:#333333"><span class="c">半</span>/<span class="c">一</span></div>
<div class="t" style="left:653px;top:447px;width:50px;height:25px;line-height:25px;color:#333333">0.97</div>
<div class="t" style="left:704px;top:447px;width:63px;height:25px;line-height:25px;color:#333333">1.66</div>
<div class="t" style="left:768px;top:447px;width:64px;height:25px;line-height:25px;color:#333333">3.41</div>
<div class="t" style="left:833px;top:447px;width:65px;height:25px;line-height:25px;color:#333333">4.83</div>
<div class="t" style="left:899px;top:447px;width:36px;height:25px;line-height:25px;color:#e02424"><span class="c">胜</span></div>
<div class="t" style="left:936px;top:447px;width:37px;height:25px;line-height:25px;color:#c81818"><span class="c">赢</span></div>
<div class="t" style="left:974px;top:447px;width:56px;height:25px;line-height:25px;color:#d02a10"><span class="c">大</span></div>
<div class="t" style="left:4px;top:473px;width:80px;height:25px;line-height:25px;color:#f0fff0"><span class="c">日足联</span></div>
<div class="t" style="left:85px;top:473px;width:74px;height:25px;line-height:25px;color:#333333">25-05-31</div>
<div class="t" style="left:160px;top:473px;width:126px;height:25px;line-height:25px;color:#222222"><span class="c">新宿创造</span></div>
<div class="t" style="left:287px;top:473px;width:87px;height:25px;line-height:25px;color:#333333"><span style="color:#d82a2a">0-1</span>(0-0)</div>
<div class="t" style="left:375px;top:473px;width:37px;height:25px;line-height:25px;color:#333333">13-6</div>
<div class="t" style="left:413px;top:473px;width:109px;height:25px;line-height:25px;color:#1f7d1f"><span class="c">润梅尔青森</span></div>
<div class="t" style="left:523px;top:473px;width:47px;height:25px;line-height:25px;color:#333333">0.73</div>
<div class="t" style="left:571px;top:473px;width:81px;height:25px;line-height:25px;color:#333333"><span class="c">受平</span>/<span class="c">半</span></div>
<div class="t" style="left:653px;top:473px;width:50px;height:25px;line-height:25px;color:#333333">1.17</div>
<div class="t" style="left:704px;top:473px;width:63px;height:25px;line-height:25px;color:#333333">2.86</div>
<div class="t" style="left:768px;top:473px;width:64px;height:25px;line-height:25px;color:#333333">2.93</div>
<div class="t" style="left:833px;top:473px;width:65px;height:25px;line-height:25px;color:#333333">2.46</div>
<div class="t" style="left:899px;top:473px;width:36px;height:25px;line-height:25px;color:#e02424"><span class="c">胜</span></div>
<div class="t" style="left:936px;top:473px;width:37px;height:25px;line-height:25px;color:#c81818"><span class="c">赢</span></div>
<div class="t" style="left:974px;top:473px;width:56px;height:25px;line-height:25px;color:#1414b0"><span class="c">小</span></div>
<div class="t" style="left:4px;top:499px;width:80px;height:25px;line-height:25px;color:#f0fff0"><span class="c">日皇杯</span></div>
<div class="t" style="left:85px;top:499px;width:74px;height:25px;line-height:25px;color:#333333">25-05-25</div>
<div class="t" style="left:160px;top:499px;width:126px;height:25px;line-height:25px;color:#1f7d1f"><span class="c">润梅尔青森</span></div>
<div class="t" style="left:287px;top:499px;width:87px;height:25px;line-height:25px;color:#333333"><span style="color:#d82a2a">5-0</span>(1-0)</div>
<div class="t" style="left:375px;top:499px;width:37px;height:25px;line-height:25px;color:#333333">0-0</div>
<div class="t" style="left:413px;top:499px;width:109px;height:25px;line-height:25px;color:#222222">BTOP<span class="c">栗山</span></div>
<div class="t" style="left:523px;top:499px;width:47px;height:25px;line-height:25px;color:#333333"></div>
<div class="t" style="left:571px;top:499px;width:81px;height:25px;line-height:25px;color:#333333"></div>
<div class="t" style="left:653px;top:499px;width:50px;height:25px;line-height:25px;color:#333333"></div>
<div class="t" style="left:704px;top:499px;width:63px;height:25px;line-height:25px;color:#333333"></div>
<div class="t" style="left:768px;top:499px;width:64px;height:25px;line-height:25px;color:#333333"></div>
<div class="t" style="left:833px;top:499px;width:65px;height:25px;line-height:25px;color:#333333"></div>
<div class="t" style="left:899px;top:499px;width:36px;height:25px;line-height:25px;color:#e02424"><span class="c">胜</span></div>
<div class="t" style="left:4px;top:525px;width:80px;height:25px;line-height:25px;color:#f0fff0"><span class="c">日足联</span></div>
<div class="t" style="left:85px;top:525px;width:74px;height:25px;line-height:25px;color:#333333">25-05-18</div>
<div class="t" style="left:160px;top:525px;width:126px;height:25px;line-height:25px;color:#1f7d1f"><span class="c">润梅尔青森</span></div>
<div class="t" style="left:287px;top:525px;width:87px;height:25px;line-height:25px;color:#333333"><span style="color:#d82a2a">2-2</span>(1-1)</div>
<div class="t" style="left:375px;top:525px;width:37px;height:25px;line-height:25px;color:#333333">0-0</div>
<div class="t" style="left:413px;top:525px;width:109px;height:25px;line-height:25px;color:#222222"><span class="c">丸安冈崎</span></div>
<div class="t" style="left:523px;top:525px;width:47px;height:25px;line-height:25px;color:#333333">0.88</div>
<div class="t" style="left:571px;top:525px;width:81px;height:25px;line-height:25px;color:#333333"><span class="c">半</span>/<span class="c">一</span></div>
<div class="t" style="left:653px;top:525px;width:50px;height:25px;line-height:25px;color:#333333">1.00</div>
<div class="t" style="left:704px;top:525px;width:63px;height:25px;line-height:25px;color:#333333">1.64</div>
<div class="t" style="left:768px;top:525px;width:64px;height:25px;line-height:25px;color:#333333">3.31</div>
<div class="t" style="left:833px;top:525px;width:65px;height:25px;line-height:25px;color:#333333">5.24</div>
<div class="t" style="left:899px;top:525px;width:36px;height:25px;line-height:25px;color:#138a13"><span class="c">平</span></div>
<div class="t" style="left:936px;top:525px;width:37px;height:25px;line-height:25px;color:#1414b0"><span class="c">输</span></div>
<div class="t" style="left:974px;top:525px;width:56px;height:25px;line-height:25px;color:#d02a10"><span class="c">大</span></div>
<div class="t" style="left:4px;top:551px;width:80px;height:25px;line-height:25px;color:#f0fff0"><span class="c">日足联</span></div>
<div class="t" style="left:85px;top:551px;width:74px;height:25px;line-height:25px;color:#333333">25-05-03</div>
<div class="t" style="left:160px;top:551px;width:126px;height:25px;line-height:25px;color:#222222">FC<span class="c">本田</span></div>
<div class="t" style="left:287px;top:551px;width:87px;height:25px;line-height:25px;color:#333333"><span style="color:#d82a2a">0-1</span>(0-1)</div>
<div class="t" style="left:375px;top:551px;width:37px;height:25px;line-height:25px;color:#333333">0-0</div>
<div class="t" style="left:413px;top:551px;width:109px;height:25px;line-height:25px;color:#1f7d1f"><span class="c">润梅尔青森</span></div>
<div class="t" style="left:523px;top:551px;width:47px;height:25px;line-height:25px;color:#333333">1.20</div>
<div class="t" style="left:571px;top:551px;width:81px;height:25px;line-height:25px;color:#333333"><span class="c">平</span>/<span class="c">半</span></div>
<div class="t" style="left:653px;top:551px;width:50px;height:25px;line-height:25px;color:#333333">0.71</div>
<div class="t" style="left:704px;top:551px;width:63px;height:25px;line-height:25px;color:#333333">2.54</div>
<div class="t" style="left:768px;top:551px;width:64px;height:25px;line-height:25px;color:#333333">2.60</div>
<div class="t" style="left:833px;top:551px;width:65px;height:25px;line-height:25px;color:#333333">3.12</div>
<div class="t" style="left:899px;top:551px;width:36px;height:25px;line-height:25px;color:#e02424"><span class="c">胜</span></div>
<div class="t" style="left:936px;top:551px;width:37px;height:25px;line-height:25px;color:#c81818"><span class="c">赢</span></div>
<div class="t" style="left:974px;top:551px;width:56px;height:25px;line-height:25px;color:#1414b0"><span class="c">小</span></div>
<div class="t" style="left:4px;top:577px;width:80px;height:25px;line-height:25px;color:#f0fff0"><span class="c">日足联</span></div>
<div class="t" style="left:85px;top:577px;width:74px;height:25px;line-height:25px;color:#333333">25-04-20</div>
<div class="t" style="left:160px;top:577px;width:126px;height:25px;line-height:25px;color:#1f7d1f"><span class="c">润梅尔青森</span></div>
<div class="t" style="left:287px;top:577px;width:87px;height:25px;line-height:25px;color:#333333"><span style="color:#d82a2a">1-0</span>(0-0)</div>
<div class="t" style="left:375px;top:577px;width:37px;height:25px;line-height:25px;color:#333333">0-0</div>
<div class="t" style="left:413px;top:577px;width:109px;height:25px;line-height:25px;color:#222222"><span class="c">美蓓亚三美</span></div>
<div class="t" style="left:523px;top:577px;width:47px;height:25px;line-height:25px;color:#333333"></div>
<div class="t" style="left:571px;top:577px;width:81px;height:25px;line-height:25px;color:#333333"></div>
<div class="t" style="left:653px;top:577px;width:50px;height:25px;line-height:25px;color:#333333"></div>
<div class="t" style="left:704px;top:577px;width:63px;height:25px;line-height:25px;color:#333333"></div>
<div class="t" style="left:768px;top:577px;width:64px;height:25px;line-height:25px;color:#333333"></div>
<div class="t" style="left:833px;top:577px;width:65px;height:25px;line-height:25px;color:#333333"></div>
<div class="t" style="left:899px;top:577px;width:36px;height:25px;line-height:25px;color:#e02424"><span class="c">胜</span></div>
<div class="t" style="left:4px;top:603px;width:80px;height:25px;line-height:25px;color:#f0fff0"><span class="c">日足联</span></div>
<div class="t" style="left:85px;top:603px;width:74px;height:25px;line-height:25px;color:#333333">25-04-12</div>
<div class="t" style="left:160px;top:603px;width:126px;height:25px;line-height:25px;color:#222222"><span class="c">未来飞鸟</span></div>
<div class="t" style="left:287px;top:603px;width:87px;height:25px;line-height:25px;color:#333333"><span style="color:#d82a2a">0-0</span>(0-0)</div>
<div class="t" style="left:375px;top:603px;width:37px;height:25px;line-height:25px;color:#333333">0-0</div>
<div class="t" style="left:413px;top:603px;width:109px;height:25px;line-height:25px;color:#1f7d1f"><span class="c">润梅尔青森</span></div>
<div class="t" style="left:523px;top:603px;width:47px;height:25px;line-height:25px;color:#333333"></div>
<div class="t" style="left:571px;top:603px;width:81px;height:25px;line-height:25px;color:#333333"></div>
<div class="t" style="left:653px;top:603px;width:50px;height:25px;line-height:25px;color:#333333"></div>
<div class="t" style="left:704px;top:603px;width:63px;height:25px;line-height:25px;color:#333333"></div>
<div class="t" style="left:768px;top:603px;width:64px;height:25px;line-height:25px;color:#333333"></div>
<div class="t" style="left:833px;top:603px;width:65px;height:25px;line-height:25px;color:#333333"></div>
<div class="t" style="left:899px;top:603px;width:36px;height:25px;line-height:25px;color:#138a13"><span class="c">平</span></div>
<div class="t" style="left:4px;top:629px;width:80px;height:25px;line-height:25px;color:#f0fff0"><span class="c">日足联</span></div>
<div class="t" style="left:85px;top:629px;width:74px;height:25px;line-height:25px;color:#333333">25-04-06</div>
<div class="t" style="left:160px;top:629px;width:126px;height:25px;line-height:25px;color:#1f7d1f"><span class="c">润梅尔青森</span></div>
<div class="t" style="left:287px;top:629px;width:87px;height:25px;line-height:25px;color:#333333"><span style="color:#d82a2a">2-1</span>(0-0)</div>
<div class="t" style="left:375px;top:629px;width:37px;height:25px;line-height:25px;color:#333333">0-0</div>
<div class="t" style="left:413px;top:629px;width:109px;height:25px;line-height:25px;color:#222222"><span class="c">岩手盛冈仙鹤</span></div>
<div class="t" style="left:523px;top:629px;width:47px;height:25px;line-height:25px;color:#333333">0.82</div>
<div class="t" style="left:571px;top:629px;width:81px;height:25px;line-height:25px;color:#333333"><span class="c">平</span>/<span class="c">半</span></div>
<div class="t" style="left:653px;top:629px;width:50px;height:25px;line-height:25px;color:#333333">1.06</div>
<div class="t" style="left:704px;top:629px;width:63px;height:25px;line-height:25px;color:#333333">2.08</div>
<div class="t" style="left:768px;top:629px;width:64px;height:25px;line-height:25px;color:#333333">2.80</div>
<div class="t" style="left:833px;top:629px;width:65px;height:25px;line-height:25px;color:#333333">3.84</div>
<div class="t" style="left:899px;top:629px;width:36px;height:25px;line-height:25px;color:#e02424"><span class="c">胜</span></div>
<div class="t" style="left:936px;top:629px;width:37px;height:25px;line-height:25px;color:#c81818"><span class="c">赢</span></div>
<div class="t" style="left:974px;top:629px;width:56px;height:25px;line-height:25px;color:#d02a10"><span class="c">大</span></div>
<div class="t" style="left:4px;top:655px;width:80px;height:25px;line-height:25px;color:#f0fff0"><span class="c">日足联</span></div>
<div class="t" style="left:85px;top:655px;width:74px;height:25px;line-height:25px;color:#333333">25-03-30</div>
<div class="t" style="left:160px;top:655px;width:126px;height:25px;line-height:25px;color:#222222"><span class="c">铃鹿竞技</span></div>
<div class="t" style="left:287px;top:655px;width:87px;height:25px;line-height:25px;color:#333333"><span style="color:#d82a2a">0-0</span>(0-0)</div>
<div class="t" style="left:375px;top:655px;width:37px;height:25px;line-height:25px;color:#333333">3-5</div>
<div class="t" style="left:413px;top:655px;width:109px;height:25px;line-height:25px;color:#1f7d1f"><span class="c">润梅尔青森</span></div>
<div class="t" style="left:523px;top:655px;width:47px;height:25px;line-height:25px;color:#333333">0.90</div>
<div class="t" style="left:571px;top:655px;width:81px;height:25px;line-height:25px;color:#333333"><span class="c">受平</span>/<span class="c">半</span></div>
<div class="t" style="left:653px;top:655px;width:50px;height:25px;line-height:25px;color:#333333">0.98</div>
<div class="t" style="left:704px;top:655px;width:63px;height:25px;line-height:25px;color:#333333">3.12</div>
<div class="t" style="left:768px;top:655px;width:64px;height:25px;line-height:25px;color:#333333">3.08</div>
<div class="t" style="left:833px;top:655px;width:65px;height:25px;line-height:25px;color:#333333">2.20</div>
<div class="t" style="left:899px;top:655px;width:36px;height:25px;line-height:25px;color:#138a13"><span class="c">平</span></div>
<div class="t" style="left:936px;top:655px;width:37px;height:25px;line-height:25px;color:#1414b0"><span class="c">输</span></div>
<div class="t" style="left:974px;top:655px;width:56px;height:25px;line-height:25px;color:#1414b0"><span class="c">小</span></div>
<div class="t" style="left:4px;top:681px;width:80px;height:25px;line-height:25px;color:#f0fff0"><span class="c">日足联</span></div>
<div class="t" style="left:85px;top:681px;width:74px;height:25px;line-height:25px;color:#333333">25-03-22</div>
<div class="t" style="left:160px;top:681px;width:126px;height:25px;line-height:25px;color:#222222"><span class="c">布瑞欧碧卡浦安</span></div>
<div class="t" style="left:287px;top:681px;width:87px;height:25px;line-height:25px;color:#333333"><span style="color:#d82a2a">0-0</span>(0-0)</div>
<div class="t" style="left:375px;top:681px;width:37px;height:25px;line-height:25px;color:#333333">2-3</div>
<div class="t" style="left:413px;top:681px;width:109px;height:25px;line-height:25px;color:#1f7d1f"><span class="c">润梅尔青森</span></div>
<div class="t" style="left:523px;top:681px;width:47px;height:25px;line-height:25px;color:#333333">1.08</div>
<div class="t" style="left:571px;top:681px;width:81px;height:25px;line-height:25px;color:#333333"><span class="c">平手</span></div>
<div class="t" style="left:653px;top:681px;width:50px;height:25px;line-height:25px;color:#333333">0.80</div>
<div class="t" style="left:704px;top:681px;width:63px;height:25px;line-height:25px;color:#333333">2.95</div>
<div class="t" style="left:768px;top:681px;width:64px;height:25px;line-height:25px;color:#333333">2.82</div>
<div class="t" style="left:833px;top:681px;width:65px;height:25px;line-height:25px;color:#333333">2.46</div>
<div class="t" style="left:899px;top:681px;width:36px;height:25px;line-height:25px;color:#138a13"><span class="c">平</span></div>
<div class="t" style="left:936px;top:681px;width:37px;height:25px;line-height:25px;color:#138a13"><span class="c">走</span></div>
<div class="t" style="left:974px;top:681px;width:56px;height:25px;line-height:25px;color:#1414b0"><span class="c">小</span></div>
<div class="t" style="left:3px;top:707px;width:1027px;height:25px;line-height:25px;color:#333333;letter-spacing:0.18px"><span class="c">近</span><span style="color:#d82a2a">10</span><span class="c">场</span>,<span class="c">胜</span>6<span class="c">平</span>4<span class="c">负</span>0, <span class="c">胜率</span>:<span style="color:#d82a2a">60%</span> <span class="c">让胜率</span>:<span style="color:#d82a2a">57.1%</span> <span class="c">大率</span>:<span style="color:#d82a2a">42.9%</span> <span class="c">单率</span>:<span style="color:#d82a2a">60%</span></div>
<div class="sel" style="left:553px;top:407px;width:59px;height:17px;"><span style="position:absolute;left:5px;top:0;line-height:17px;font-size:13px;">Crow*</span><svg style="position:absolute;left:45px;top:5px" width="10" height="7" viewBox="0 0 10 7"><path d="M0.8 1.2 L5 5.4 L9.2 1.2" fill="none" stroke="#000" stroke-width="2.1"/></svg></div>
<div class="sel" style="left:621px;top:407px;width:49px;height:17px;"><span style="position:absolute;left:4px;top:0;line-height:17px;font-size:13px;"><span class="c">终指</span></span><svg style="position:absolute;left:35px;top:5px" width="10" height="7" viewBox="0 0 10 7"><path d="M0.8 1.2 L5 5.4 L9.2 1.2" fill="none" stroke="#000" stroke-width="2.1"/></svg></div>
<div class="sel" style="left:736px;top:407px;width:68px;height:17px;"><span style="position:absolute;left:4px;top:0;line-height:17px;font-size:13px;"><span class="c">平均值</span></span><svg style="position:absolute;left:54px;top:5px" width="10" height="7" viewBox="0 0 10 7"><path d="M0.8 1.2 L5 5.4 L9.2 1.2" fill="none" stroke="#000" stroke-width="2.1"/></svg></div>
<div class="sel" style="left:814px;top:407px;width:49px;height:17px;"><span style="position:absolute;left:4px;top:0;line-height:17px;font-size:13px;"><span class="c">终指</span></span><svg style="position:absolute;left:35px;top:5px" width="10" height="7" viewBox="0 0 10 7"><path d="M0.8 1.2 L5 5.4 L9.2 1.2" fill="none" stroke="#000" stroke-width="2.1"/></svg></div>
<div class="sel" style="left:939px;top:407px;width:49px;height:17px;"><span style="position:absolute;left:4px;top:0;line-height:17px;font-size:13px;"><span class="c">全场</span></span><svg style="position:absolute;left:35px;top:5px" width="10" height="7" viewBox="0 0 10 7"><path d="M0.8 1.2 L5 5.4 L9.2 1.2" fill="none" stroke="#000" stroke-width="2.1"/></svg></div>
</div></body></html>
